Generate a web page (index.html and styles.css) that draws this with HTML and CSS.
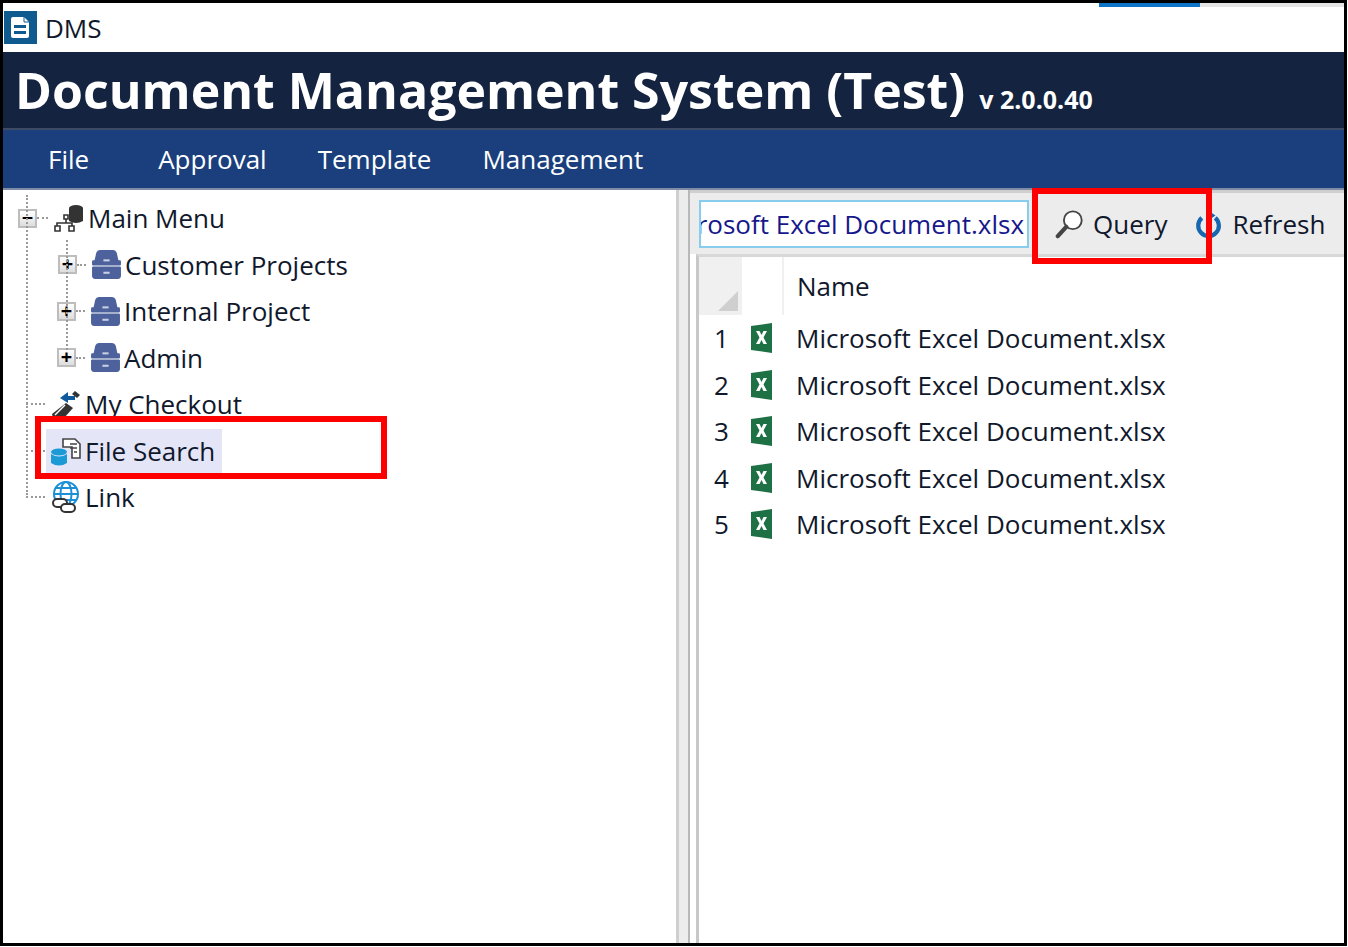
FILE: index.html
```html
<!DOCTYPE html>
<html lang="en">
<head>
  <meta charset="UTF-8">
  <title>DMS</title>
  <link rel="stylesheet" href="styles.css">
</head>
<body>

<div class="window">
  <div class="progress"></div>

  <div class="titlebar">
    <svg class="app-icon" viewBox="0 0 33 33">
      <rect width="33" height="33" fill="#0f5a8e"/>
      <path d="M9 6h11l5 5v14q0 2-2 2H9q-2 0-2-2V8q0-2 2-2z" fill="#fff"/>
      <path d="M20 6v5h5" fill="none" stroke="#0f5a8e" stroke-width="1"/>
      <rect x="10" y="14" width="12" height="3" fill="#0f5a8e"/>
      <rect x="10" y="20" width="12" height="3" fill="#0f5a8e"/>
    </svg>
    <span>DMS</span>
  </div>

  <div class="banner">
    <span class="banner-title">Document Management System (Test)</span>
    <span class="banner-version">v 2.0.0.40</span>
  </div>

  <div class="menubar">
    <span class="menu-item menu-file">File</span>
    <span class="menu-item">Approval</span>
    <span class="menu-item">Template</span>
    <span class="menu-item">Management</span>
  </div>

  <div class="workspace">
    <div class="tree">
      <div class="tree-line line-root"></div>
      <div class="tree-line line-sub"></div>

      <div class="row">
        <span class="expander">&#8722;</span>
        <span class="dash"></span>
        <svg class="icon" viewBox="0 0 32 32">
          <ellipse cx="23" cy="6" rx="7" ry="3" fill="#333"/>
          <path d="M16 6v13q7 4 14 0V6q-7 4-14 0z" fill="#333"/>
          <path d="M11 13h4v4h-4zM2 24h5v5H2zM16 24h5v5h-5z" fill="none" stroke="#333" stroke-width="1.6"/>
          <path d="M13 17v4M4 24v-3h15v3" fill="none" stroke="#333" stroke-width="1.6"/>
        </svg>
        <span class="label">Main Menu</span>
      </div>

      <div class="row sub first">
        <span class="expander">+</span>
        <span class="dash"></span>
        <svg class="icon drawer" viewBox="0 0 30 30"><use href="#drawer"/></svg>
        <span class="label">Customer Projects</span>
      </div>
      <div class="row sub">
        <span class="expander">+</span>
        <span class="dash"></span>
        <svg class="icon drawer" viewBox="0 0 30 30"><use href="#drawer"/></svg>
        <span class="label">Internal Project</span>
      </div>
      <div class="row sub">
        <span class="expander">+</span>
        <span class="dash"></span>
        <svg class="icon drawer" viewBox="0 0 30 30"><use href="#drawer"/></svg>
        <span class="label">Admin</span>
      </div>

      <div class="row leaf">
        <span class="dash"></span>
        <svg class="icon" viewBox="0 0 32 32">
          <path d="M18 4l-8 6 8 5v-3h7V8h-7z" fill="#0f5a9c"/>
          <path d="M25 3l5 4-3 3-5-4z" fill="#333"/>
          <path d="M16 15l7 5-9 10H3l-1-4z" fill="#333"/>
          <path d="M5 27l10-10" stroke="#fff" stroke-width="1.4"/>
        </svg>
        <span class="label">My Checkout</span>
      </div>

      <div class="row leaf">
        <span class="dash"></span>
        <span class="selected">
          <svg class="icon" viewBox="0 0 32 32">
            <path d="M13 4h12l5 5v14h-8V12H13z" fill="#fff" stroke="#444" stroke-width="1.6"/>
            <path d="M20 9h7M20 13h7M24 17h3" stroke="#444" stroke-width="1.6"/>
            <ellipse cx="9" cy="17" rx="8" ry="3.5" fill="#1c9ad6"/>
            <path d="M1 19v9q8 5 16 0v-9q-8 5-16 0z" fill="#1c9ad6"/>
          </svg>
          <span class="label">File Search</span>
        </span>
      </div>

      <div class="row leaf">
        <span class="dash"></span>
        <svg class="icon" viewBox="0 0 32 32">
          <circle cx="16" cy="13" r="12" fill="none" stroke="#1c8fd6" stroke-width="2"/>
          <ellipse cx="16" cy="13" rx="5.5" ry="12" fill="none" stroke="#1c8fd6" stroke-width="2"/>
          <path d="M4 13h24M6 7h20M6 19h20" stroke="#1c8fd6" stroke-width="2"/>
          <rect x="3" y="18" width="14" height="8" rx="4" fill="#fff" stroke="#333" stroke-width="2"/>
          <rect x="11" y="23" width="14" height="8" rx="4" fill="#fff" stroke="#333" stroke-width="2"/>
        </svg>
        <span class="label">Link</span>
      </div>
    </div>

    <div class="splitter"></div>

    <div class="content">
      <div class="toolbar">
        <div class="search"><span>Microsoft Excel Document.xlsx</span></div>
        <div class="tool tool-query">
          <svg class="tool-icon" viewBox="0 0 32 32">
            <circle cx="19" cy="12" r="9.5" fill="#fff" stroke="#444" stroke-width="2"/>
            <path d="M12 19L3 29" stroke="#444" stroke-width="4.5" stroke-linecap="round"/>
          </svg>
          <span>Query</span>
        </div>
        <div class="tool tool-refresh">
          <svg class="tool-icon" viewBox="0 0 32 32">
            <path d="M22 8a11 11 0 1 1-14 3" fill="none" stroke="#1766b0" stroke-width="4.5" transform="rotate(12 16 17)"/>
            <path d="M14 0l10 7-9 6z" fill="#1766b0"/>
          </svg>
          <span>Refresh</span>
        </div>
      </div>

      <div class="grid">
        <div class="grid-head">
          <div class="corner"><span class="corner-mark"></span></div>
          <div class="icon-head"></div>
          <div class="name-head">Name</div>
        </div>
        <div class="grid-row"><span class="num">1</span><svg class="xl" viewBox="0 0 21 30"><use href="#xlsx"/></svg><span>Microsoft Excel Document.xlsx</span></div>
        <div class="grid-row"><span class="num">2</span><svg class="xl" viewBox="0 0 21 30"><use href="#xlsx"/></svg><span>Microsoft Excel Document.xlsx</span></div>
        <div class="grid-row"><span class="num">3</span><svg class="xl" viewBox="0 0 21 30"><use href="#xlsx"/></svg><span>Microsoft Excel Document.xlsx</span></div>
        <div class="grid-row"><span class="num">4</span><svg class="xl" viewBox="0 0 21 30"><use href="#xlsx"/></svg><span>Microsoft Excel Document.xlsx</span></div>
        <div class="grid-row"><span class="num">5</span><svg class="xl" viewBox="0 0 21 30"><use href="#xlsx"/></svg><span>Microsoft Excel Document.xlsx</span></div>
      </div>
    </div>
  </div>

  <div class="callout callout-search"></div>
  <div class="callout callout-query"></div>
</div>

<svg class="defs" width="0" height="0">
  <symbol id="drawer" viewBox="0 0 30 30">
    <path d="M3 13l2-9q1-3 4-3h12q3 0 4 3l2 9z" fill="#4d629c"/>
    <path d="M1 12q0-1 1-1h26q1 0 1 1v3q0 1-1 1H2q-1 0-1-1z" fill="#4d629c"/>
    <path d="M1 18q0-1 1-1h26q1 0 1 1v8q0 3-3 3H4q-3 0-3-3z" fill="#4d629c"/>
    <rect x="1" y="4" width="28" height="2" fill="#8d9cc4" opacity="0"/>
    <rect x="12" y="10" width="6" height="2" fill="#c9d0e4"/>
    <rect x="12" y="22" width="6" height="2" fill="#c9d0e4"/>
  </symbol>
  <symbol id="xlsx" viewBox="0 0 21 30">
    <path d="M0 3l21-3v30L0 27z" fill="#1e7145"/>
    <path d="M5 8h3.500l2 4 2-4H16l-3.500 6.500L16 21h-3.500l-2-4-2 4H5l3.500-6.500z" fill="#fff"/>
  </symbol>
</svg>

</body>
</html>
```

FILE: styles.css
```css
html, body {
  margin: 0;
  padding: 0;
  background: #fff;
}
body {
  font-family: "Open Sans", "Noto Sans", sans-serif;
  color: #10182c;
}
.defs {
  position: absolute;
}

.window {
  position: relative;
  box-sizing: border-box;
  width: 1347px;
  height: 946px;
  border: 3px solid #000;
  display: flex;
  flex-direction: column;
  overflow: hidden;
  background: #fff;
}
.progress {
  position: absolute;
  top: 0;
  left: 1096px;
  width: 101px;
  height: 4px;
  background: #0d74c8;
  box-shadow: 101px 0 0 #e4e4e4, 146px 0 0 #e4e4e4;
}

.titlebar {
  height: 49px;
  display: flex;
  align-items: center;
  gap: 8px;
  font-size: 26px;
}
.app-icon {
  width: 33px;
  height: 33px;
  margin-left: 1px;
}

.banner {
  height: 76px;
  background: #14233f;
  border-bottom: 2px solid #3d4a66;
  box-sizing: content-box;
  color: #fff;
  display: flex;
  align-items: baseline;
  padding-left: 12px;
  gap: 14px;
  font-weight: 700;
  line-height: 76px;
}
.banner-title {
  font-size: 50px;
}
.banner-version {
  font-size: 25px;
}

.menubar {
  height: 58px;
  background: #1a3f7c;
  border-bottom: 2px solid #7f8ca6;
  color: #fff;
  display: flex;
  align-items: center;
  font-size: 26px;
  padding-left: 45px;
  gap: 51px;
}
.menu-file {
  margin-right: 18px;
}

.workspace {
  flex: 1;
  display: flex;
  min-height: 0;
}

.tree {
  position: relative;
  width: 673px;
  padding-top: 5px;
  font-size: 26px;
}
.row {
  height: 46.5px;
  display: flex;
  align-items: center;
  padding-left: 15px;
}
.row.sub {
  padding-left: 54px;
}
.row.sub.first {
  padding-left: 55px;
}
.row.leaf {
  padding-left: 23px;
}
.expander {
  box-sizing: border-box;
  width: 19px;
  height: 19px;
  border: 2px solid #bdbdbd;
  background: linear-gradient(#fff, #ddd);
  color: #000;
  font-size: 20px;
  font-weight: 700;
  line-height: 13px;
  text-align: center;
  flex: none;
}
.dash {
  width: 11px;
  border-top: 2px dotted #999;
  margin-right: 5px;
  flex: none;
}
.row.sub .dash {
  width: 9px;
  margin-right: 5px;
}
.row.leaf .dash {
  width: 19px;
  margin-right: 5px;
}
.icon {
  width: 32px;
  height: 32px;
  margin-right: 3px;
  flex: none;
}
.icon.drawer {
  width: 31px;
  height: 31px;
}
.label {
  white-space: nowrap;
}
.selected {
  display: flex;
  align-items: center;
  height: 44px;
  background: #e4e6f8;
  margin-left: -4px;
  padding-left: 4px;
  width: 172px;
}
.tree-line {
  position: absolute;
  border-left: 2px dotted #999;
}
.line-root {
  left: 23px;
  top: 5px;
  height: 300px;
}
.line-sub {
  left: 63px;
  top: 50px;
  height: 110px;
}

.splitter {
  box-sizing: border-box;
  width: 14px;
  background: #ececec;
  border-left: 3px solid #cfcfcf;
  border-right: 2px solid #b8b8b8;
}

.content {
  flex: 1;
  display: flex;
  flex-direction: column;
  min-width: 0;
}
.toolbar {
  height: 64px;
  background: #ececec;
  border-top: 3px solid #cfcfcf;
  box-sizing: border-box;
  display: flex;
  align-items: center;
  padding-left: 9px;
  font-size: 26px;
}
.search {
  box-sizing: border-box;
  width: 330px;
  height: 48px;
  background: #fff;
  border: 2px solid #86cdee;
  color: #17178c;
  display: flex;
  justify-content: flex-end;
  align-items: center;
  overflow: hidden;
  white-space: nowrap;
  padding-right: 3px;
}
.search span {
  flex: none;
}
.tool {
  display: flex;
  align-items: center;
  flex: none;
}
.tool-query {
  margin-left: 26px;
  gap: 8px;
}
.tool-refresh {
  margin-left: 26px;
  gap: 9px;
}
.tool-icon {
  width: 30px;
  height: 32px;
}

.grid {
  flex: 1;
  border-left: 3px solid #c8c8c8;
  margin-left: 6px;
  border-top: 3px solid #d8d8d8;
  font-size: 26px;
}
.grid-head {
  display: flex;
  height: 58px;
}
.corner {
  position: relative;
  width: 43px;
  background: #f0f0f0;
}
.corner-mark {
  position: absolute;
  right: 4px;
  bottom: 4px;
  width: 0;
  height: 0;
  border-style: solid;
  border-width: 0 0 20px 20px;
  border-color: transparent transparent #cfcfcf transparent;
}
.icon-head {
  width: 40px;
  border-right: 2px solid #f0f0f0;
}
.name-head {
  padding-left: 13px;
  line-height: 58px;
}
.grid-row {
  height: 46.5px;
  display: flex;
  align-items: center;
  white-space: nowrap;
}
.num {
  width: 52px;
  padding-left: 15px;
  box-sizing: border-box;
}
.xl {
  width: 21px;
  height: 30px;
  margin-right: 24px;
}

.callout {
  position: absolute;
  box-sizing: border-box;
  border: 6px solid #ff0000;
}
.callout-search {
  left: 32px;
  top: 413px;
  width: 352px;
  height: 63px;
}
.callout-query {
  left: 1029px;
  top: 185px;
  width: 180px;
  height: 76px;
}
```
